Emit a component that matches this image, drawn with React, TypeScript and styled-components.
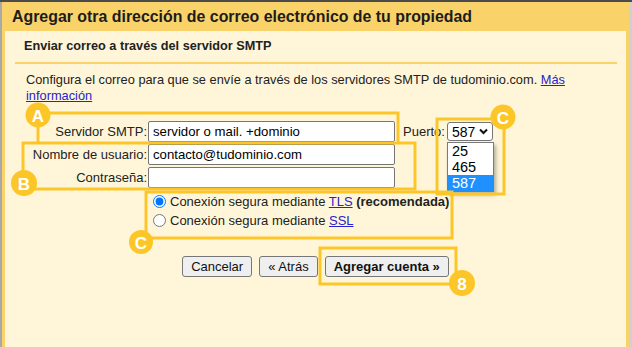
import React from "react";
import styled, { createGlobalStyle } from "styled-components";

const GlobalStyle = createGlobalStyle`
  html, body {
    margin: 0;
    padding: 0;
    background: #d2d2d2;
  }
  body {
    font-family: "Liberation Sans", Arial, sans-serif;
  }
`;

const YELLOW = "#f9d26a";
const CREAM = "#fff6d9";
const MARK = "#fdc628";
const TEXT = "#222222";
const LINK = "#2a22cc";

const Page = styled.div`
  position: relative;
  width: 632px;
  height: 347px;
  overflow: hidden;
  display: flex;
  flex-direction: column;
  color: ${TEXT};
  font-size: 13px;
`;

const TopLine = styled.div`
  height: 2px;
  background: #4b4b4b;
`;

const Body = styled.div`
  flex: 1;
  display: flex;
`;

const Dialog = styled.div`
  width: 621px;
  display: flex;
  flex-direction: column;
  background: ${YELLOW};
  border-left: 2px solid #a9a9a9;
  padding: 0 3px;
`;

const Header = styled.h1`
  margin: 0;
  height: 29px;
  line-height: 30px;
  padding-left: 7px;
  font-size: 15.9px;
  font-weight: bold;
  color: #1c1c1c;
  white-space: nowrap;
`;

const Panel = styled.div`
  flex: 1;
  background: ${CREAM};
`;

const SectionTitle = styled.h2`
  margin: 0;
  height: 31px;
  line-height: 31px;
  padding-left: 19px;
  font-size: 12.7px;
  font-weight: bold;
`;

const Rule = styled.div`
  height: 2px;
  margin: 0 9px 0 10px;
  background: ${YELLOW};
`;

const Intro = styled.p`
  margin: 8px 50px 0 21px;
  line-height: 16px;
  font-size: 12.8px;
`;

const Link = styled.a`
  color: ${LINK};
  text-decoration: underline;
`;

const Form = styled.div`
  margin-top: 17px;
  display: flex;
  flex-direction: column;
  gap: 2px;
`;

const Row = styled.div`
  display: flex;
  align-items: center;
  height: 21px;
`;

const Label = styled.label`
  width: 142px;
  text-align: right;
  white-space: nowrap;
`;

const Input = styled.input`
  box-sizing: border-box;
  width: 247px;
  height: 21px;
  margin: 0 0 0 1px;
  padding: 0 4px;
  border: 1px solid #767676;
  border-radius: 2px;
  background: #fff;
  font-family: "Liberation Sans", Arial, sans-serif;
  font-size: 13.2px;
  color: #000;
`;

const PortLabel = styled.span`
  margin-left: 8px;
`;

const SelectWrap = styled.div`
  position: relative;
  margin-left: 2px;
`;

const SelectBox = styled.div`
  box-sizing: border-box;
  width: 46px;
  height: 19px;
  padding: 0 4px 0 4px;
  display: flex;
  align-items: center;
  justify-content: space-between;
  border: 1px solid #767676;
  border-radius: 3px;
  background: #fff;
  font-size: 14px;
  color: #000;
`;

const Dropdown = styled.div`
  position: absolute;
  top: 20px;
  left: 0;
  width: 47px;
  box-sizing: border-box;
  border: 1px solid #7a7a7a;
  background: #fff;
  box-shadow: 2px 3px 4px rgba(0, 0, 0, 0.3);
  z-index: 2;
`;

const Option = styled.div<{ $selected?: boolean }>`
  height: 16px;
  line-height: 16px;
  padding-left: 4px;
  font-size: 14.5px;
  background: ${(p) => (p.$selected ? "#1e90ff" : "#fff")};
  color: ${(p) => (p.$selected ? "#fff" : "#000")};
`;

const RadioGroup = styled.div`
  margin: 4px 0 0 148px;
`;

const RadioRow = styled.label`
  display: flex;
  align-items: center;
  height: 19px;
  white-space: nowrap;
`;

const Radio = styled.input`
  width: 13px;
  height: 13px;
  margin: 0 4px 0 0;
`;

const ButtonRow = styled.div`
  margin-top: 26px;
  display: flex;
  justify-content: center;
  gap: 7px;
`;

const Button = styled.button<{ $primary?: boolean }>`
  height: 21px;
  padding: 0 8px;
  border: 1px solid #767676;
  border-radius: 3px;
  background: #efefef;
  font-family: "Liberation Sans", Arial, sans-serif;
  font-size: 13px;
  font-weight: ${(p) => (p.$primary ? "bold" : "normal")};
  color: #111;
`;

const RightStrip = styled.div`
  flex: 1;
  background: #d0d0d0;
`;

const Overlay = styled.svg`
  position: absolute;
  top: 0;
  left: 0;
  pointer-events: none;
  z-index: 5;
`;

const Badge = ({ x, y, r, label }: { x: number; y: number; r: number; label: string }) => (
  <g>
    <circle cx={x} cy={y} r={r} fill={MARK} />
    <text
      x={x}
      y={y + 1}
      fill="#fff"
      fontSize="17"
      fontWeight="bold"
      fontFamily="Liberation Sans, Arial, sans-serif"
      textAnchor="middle"
      dominantBaseline="central"
    >
      {label}
    </text>
  </g>
);

const Chevron = () => (
  <svg width="9" height="7" viewBox="0 0 9 7">
    <polyline points="1,1.5 4.5,5 8,1.5" fill="none" stroke="#111" strokeWidth="2" />
  </svg>
);

export default function App() {
  return (
    <>
      <GlobalStyle />
      <Page>
        <TopLine />
        <Body>
          <Dialog>
            <Header>Agregar otra dirección de correo electrónico de tu propiedad</Header>
            <Panel>
              <SectionTitle>Enviar correo a través del servidor SMTP</SectionTitle>
              <Rule />
              <Intro>
                Configura el correo para que se envíe a través de los servidores SMTP de
                tudominio.com. <Link href="#">Más</Link>
                <br />
                <Link href="#">información</Link>
              </Intro>
              <Form>
                <Row>
                  <Label htmlFor="smtp">Servidor SMTP:</Label>
                  <Input id="smtp" defaultValue="servidor o mail. +dominio" />
                  <PortLabel>Puerto:</PortLabel>
                  <SelectWrap>
                    <SelectBox>
                      <span>587</span>
                      <Chevron />
                    </SelectBox>
                    <Dropdown>
                      <Option>25</Option>
                      <Option>465</Option>
                      <Option $selected>587</Option>
                    </Dropdown>
                  </SelectWrap>
                </Row>
                <Row>
                  <Label htmlFor="user">Nombre de usuario:</Label>
                  <Input id="user" defaultValue="contacto@tudominio.com" />
                </Row>
                <Row>
                  <Label htmlFor="pass">Contraseña:</Label>
                  <Input id="pass" type="password" />
                </Row>
              </Form>
              <RadioGroup>
                <RadioRow>
                  <Radio type="radio" name="sec" defaultChecked />
                  <span>
                    Conexión segura mediante <Link href="#">TLS</Link> <b>(recomendada)</b>
                  </span>
                </RadioRow>
                <RadioRow>
                  <Radio type="radio" name="sec" />
                  <span>
                    Conexión segura mediante <Link href="#">SSL</Link>
                  </span>
                </RadioRow>
              </RadioGroup>
              <ButtonRow>
                <Button>Cancelar</Button>
                <Button>« Atrás</Button>
                <Button $primary>Agregar cuenta »</Button>
              </ButtonRow>
            </Panel>
          </Dialog>
          <RightStrip />
        </Body>
        <Overlay width="632" height="347" viewBox="0 0 632 347">
          <g fill="none" stroke={MARK} strokeWidth="3">
            <path d="M38 113 H398 V143" />
            <path d="M38 113 V143" />
            <path d="M23 143 H415 V189 H23 Z" />
            <path d="M437 119 H504 V194 H437 Z" />
            <path d="M146 192 H452 V238 H146 Z" />
            <path d="M320 248 H456 V284 H320 Z" />
          </g>
          <Badge x={38} y={115} r={12.5} label="A" />
          <Badge x={24} y={183} r={13} label="B" />
          <Badge x={503} y={117} r={12.5} label="C" />
          <Badge x={141} y={242} r={12} label="C" />
          <Badge x={462} y={283} r={13} label="8" />
        </Overlay>
      </Page>
    </>
  );
}
